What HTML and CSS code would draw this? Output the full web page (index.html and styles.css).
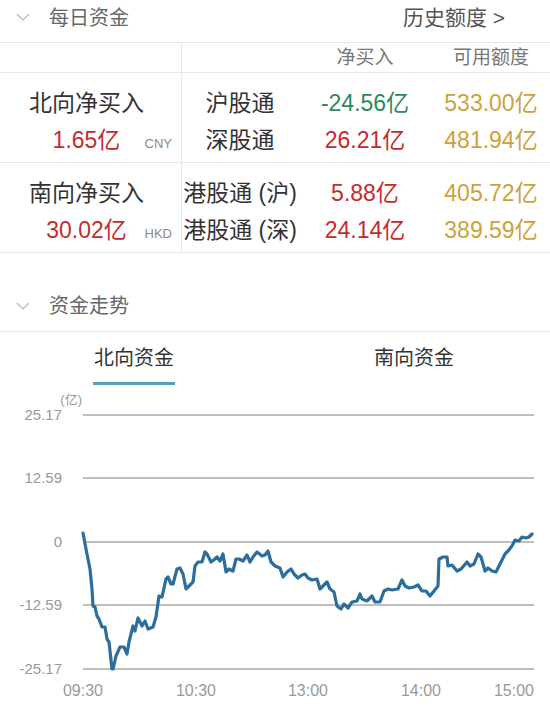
FILE: index.html
```html
<!DOCTYPE html>
<html>
<head>
    <title>每日资金</title>
    <meta charset="UTF-8">
    <meta name="viewport" content="width=device-width, initial-scale=1.0">
    <link rel="stylesheet" href="styles.css">
</head>
<body>
    <div class="section-head top">
        <svg class="chevron" width="14" height="8" viewBox="0 0 14 8"><polyline points="1,1 7,7 13,1" /></svg>
        <span class="section-title">每日资金</span>
        <a class="history-link" href="#">历史额度 &gt;</a>
    </div>

    <div class="flow-table">
        <div class="row head-row">
            <div class="cell side"></div>
            <div class="cell"></div>
            <div class="cell col-title">净买入</div>
            <div class="cell col-title">可用额度</div>
        </div>
        <div class="row">
            <div class="cell side">
                <div class="line">北向净买入</div>
                <div class="line total">
                    <span class="amount red">1.65亿</span>
                    <span class="currency">CNY</span>
                </div>
            </div>
            <div class="cell">
                <div class="line">沪股通</div>
                <div class="line">深股通</div>
            </div>
            <div class="cell">
                <div class="line green">-24.56亿</div>
                <div class="line red">26.21亿</div>
            </div>
            <div class="cell">
                <div class="line gold">533.00亿</div>
                <div class="line gold">481.94亿</div>
            </div>
        </div>
        <div class="row">
            <div class="cell side">
                <div class="line">南向净买入</div>
                <div class="line total">
                    <span class="amount red">30.02亿</span>
                    <span class="currency">HKD</span>
                </div>
            </div>
            <div class="cell">
                <div class="line">港股通 (沪)</div>
                <div class="line">港股通 (深)</div>
            </div>
            <div class="cell">
                <div class="line red">5.88亿</div>
                <div class="line red">24.14亿</div>
            </div>
            <div class="cell">
                <div class="line gold">405.72亿</div>
                <div class="line gold">389.59亿</div>
            </div>
        </div>
    </div>

    <div class="section-head trend">
        <svg class="chevron" width="14" height="8" viewBox="0 0 14 8"><polyline points="1,1 7,7 13,1" /></svg>
        <span class="section-title">资金走势</span>
    </div>

    <div class="tabs">
        <div class="tab active"><span>北向资金</span></div>
        <div class="tab"><span>南向资金</span></div>
    </div>

    <svg class="chart" width="550" height="326" viewBox="0 386 550 326">
        <g class="grid">
            <line x1="83" y1="416" x2="534" y2="416" />
            <line x1="83" y1="479" x2="534" y2="479" />
            <line x1="83" y1="543" x2="534" y2="543" />
            <line x1="83" y1="606" x2="534" y2="606" />
            <line x1="83" y1="670" x2="534" y2="670" />
        </g>
        <g class="axis">
            <text x="82" y="405" class="unit">(亿)</text>
            <text x="62" y="421">25.17</text>
            <text x="62" y="484">12.59</text>
            <text x="62" y="548">0</text>
            <text x="62" y="611">-12.59</text>
            <text x="62" y="675">-25.17</text>
        </g>
        <g class="time">
            <text x="83" y="697">09:30</text>
            <text x="196" y="697">10:30</text>
            <text x="308" y="697">13:00</text>
            <text x="421" y="697">14:00</text>
            <text x="534" y="697" class="last">15:00</text>
        </g>
        <polyline class="series" points="83,534 86,550 90,570 92,590 93,607 95,608 97,617 99,620 102,628 105,628 107,640 109,643 112,670 113,670 116,657 120,648 124,648 127,655 129,643 133,627 135,632 138,619 142,627 145,622 148,630 153,628 156,618 159,597 162,598 166,580 168,578 171,585 173,585 177,570 180,569 183,575 186,590 189,587 193,583 195,567 198,563 202,563 205,553 207,555 211,563 215,560 217,558 220,562 223,555 226,573 229,570 233,572 236,560 239,560 243,562 247,556 250,563 253,558 257,553 262,557 265,556 268,552 271,563 275,567 280,569 283,578 287,573 291,570 294,575 298,579 302,576 305,575 308,579 312,581 317,580 320,590 323,587 327,583 330,590 334,593 337,607 341,610 344,605 348,609 352,603 357,602 360,595 362,600 367,602 372,597 375,603 380,603 384,592 388,590 392,591 398,590 402,581 405,587 409,589 414,588 418,586 422,592 426,592 430,597 434,592 438,587 439,560 443,558 447,558 448,567 452,566 457,572 461,570 467,563 470,567 474,565 478,555 481,558 485,572 488,569 492,572 496,573 500,565 505,555 508,552 512,547 515,541 519,542 522,538 526,539 529,538 532,535" />
    </svg>
</body>
</html>
```

FILE: styles.css
```css
body {
    margin: 0;
    width: 550px;
    background: #fff;
    color: #333;
    font-family: "Liberation Sans", "Noto Sans CJK SC", sans-serif;
}
.section-head {
    display: flex;
    align-items: center;
    height: 43px;
    padding: 0 0 0 16px;
    box-sizing: border-box;
    border-bottom: 1px solid #e8e8e8;
}
.section-head.top {
    padding-bottom: 10px;
}
.section-head.trend {
    margin-top: 25px;
    height: 54px;
}
.chevron {
    fill: none;
    stroke: #b8b8b8;
    stroke-width: 1.2;
    margin-right: 19px;
    margin-top: 2px;
}
.section-title {
    font-size: 20px;
    color: #666;
}
.history-link {
    margin-left: auto;
    margin-right: 45px;
    font-size: 21px;
    color: #555;
    text-decoration: none;
}
.row {
    display: grid;
    grid-template-columns: 182px 116px 134px 118px;
    height: 90px;
    box-sizing: border-box;
    border-bottom: 1px solid #e8e8e8;
}
.cell {
    text-align: center;
    padding: 12px 0 0;
}
.cell.side {
    border-right: 1px solid #e8e8e8;
    padding-right: 8px;
}
.line {
    font-size: 23px;
    line-height: 37px;
    height: 37px;
    white-space: nowrap;
}
.total {
    display: grid;
    grid-template-columns: 1fr auto 1fr;
    align-items: baseline;
}
.total .amount {
    grid-column: 2;
}
.total .currency {
    grid-column: 3;
    justify-self: end;
    font-size: 13px;
    color: #888;
    margin-right: 1px;
}
.row.head-row {
    height: 30px;
}
.head-row .cell {
    padding: 0;
}
.col-title {
    font-size: 19px;
    line-height: 30px;
    color: #777;
}
.red {
    color: #c62b2b;
}
.green {
    color: #2e8a55;
}
.gold {
    color: #cda23a;
}
.tabs {
    display: grid;
    grid-template-columns: 268px 1fr;
    column-gap: 10px;
    height: 53px;
}
.tab {
    display: flex;
    justify-content: center;
    align-items: flex-end;
}
.tab span {
    font-size: 20px;
    line-height: 28px;
    height: 28px;
    color: #333;
    padding: 0 1px 10px;
    border-bottom: 3px solid transparent;
}
.tab.active span {
    border-bottom-color: #4fa3b4;
}
.chart {
    display: block;
}
.grid line {
    stroke: #808080;
    stroke-width: 1.2;
}
.axis text {
    font-size: 15px;
    fill: #999;
    text-anchor: end;
}
.axis .unit {
    font-size: 13px;
}
.time text {
    font-size: 16px;
    fill: #999;
    text-anchor: middle;
}
.time .last {
    text-anchor: end;
}
.series {
    fill: none;
    stroke: #2c6e9b;
    stroke-width: 3.2;
    stroke-linejoin: round;
    stroke-linecap: round;
}
```
